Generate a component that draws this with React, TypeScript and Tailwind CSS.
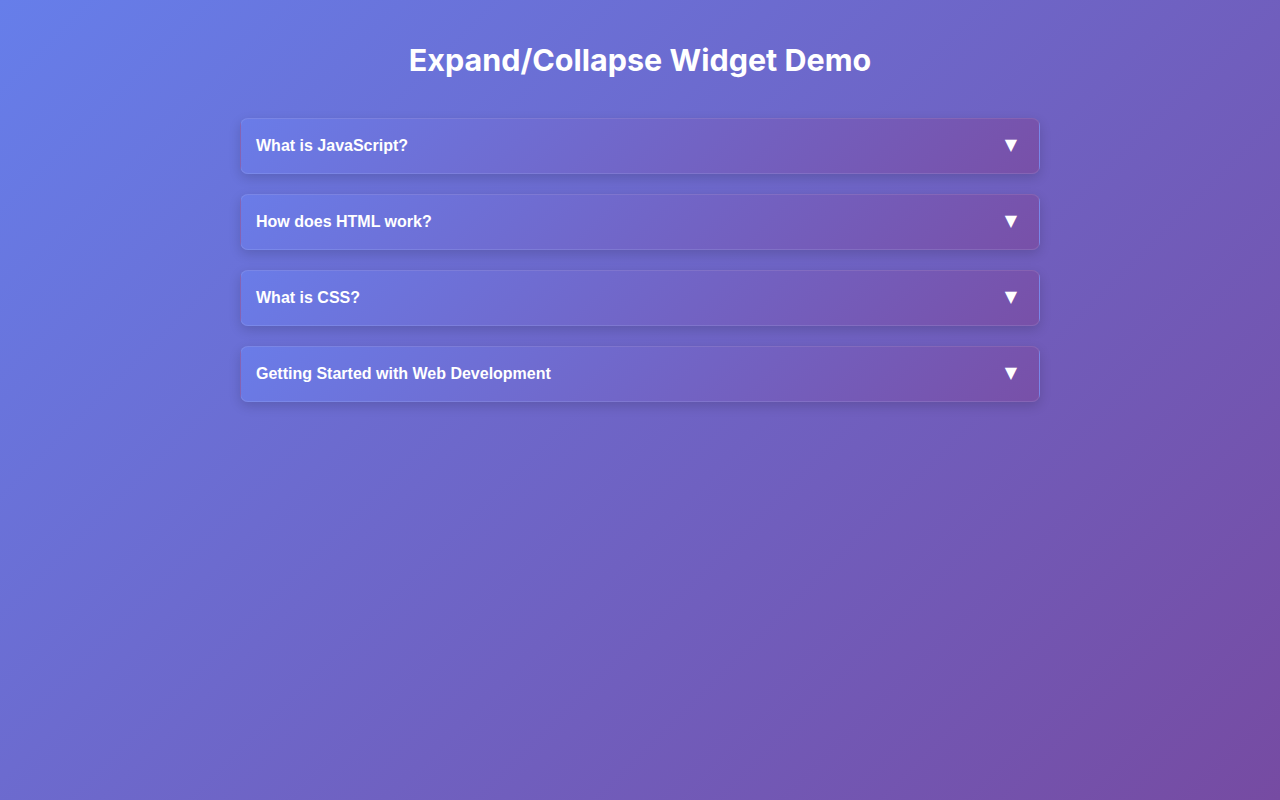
import React, { useState } from "react";

const items = [
  { q: "What is JavaScript?", a: "JavaScript is a programming language that enables interactive web pages." },
  { q: "How does HTML work?", a: "HTML structures content on the web using elements and tags." },
  { q: "What is CSS?", a: "CSS describes how HTML elements should be displayed." },
  { q: "Getting Started with Web Development", a: "Start by learning HTML, CSS and JavaScript." },
];

export default function App() {
  const [open, setOpen] = useState<number | null>(null);
  return (
    <div className="min-h-[800px] w-full bg-[linear-gradient(135deg,#667eea_0%,#764ba2_100%)] px-5 pt-[40px]">
      <h1 className="text-center text-[30.5px] leading-[40px] font-bold text-white [font-family:Inter,'Liberation_Sans',sans-serif]">
        Expand/Collapse Widget Demo
      </h1>
      <div className="mx-auto mt-[38px] flex w-[800px] flex-col gap-5">
        {items.map((it, i) => (
          <div
            key={i}
            className="overflow-hidden rounded-lg border border-white/10 bg-[linear-gradient(135deg,#6a7ce8_0%,#7850a8_100%)] shadow-[0_4px_12px_rgba(0,0,0,0.15)]"
          >
            <button
              onClick={() => setOpen(open === i ? null : i)}
              className="flex h-[54px] w-full items-center justify-between pl-[15px] pr-[22px] text-left text-white [font-family:'Liberation_Sans',Arial,sans-serif]"
            >
              <span className="text-[16px] font-bold">{it.q}</span>
              <span className="-mt-[3px] text-[16px] leading-none [font-family:'DejaVu_Sans',sans-serif]">▼</span>
            </button>
            {open === i && (
              <div className="px-[15px] pb-4 text-white [font-family:'Liberation_Sans',Arial,sans-serif]">{it.a}</div>
            )}
          </div>
        ))}
      </div>
    </div>
  );
}
